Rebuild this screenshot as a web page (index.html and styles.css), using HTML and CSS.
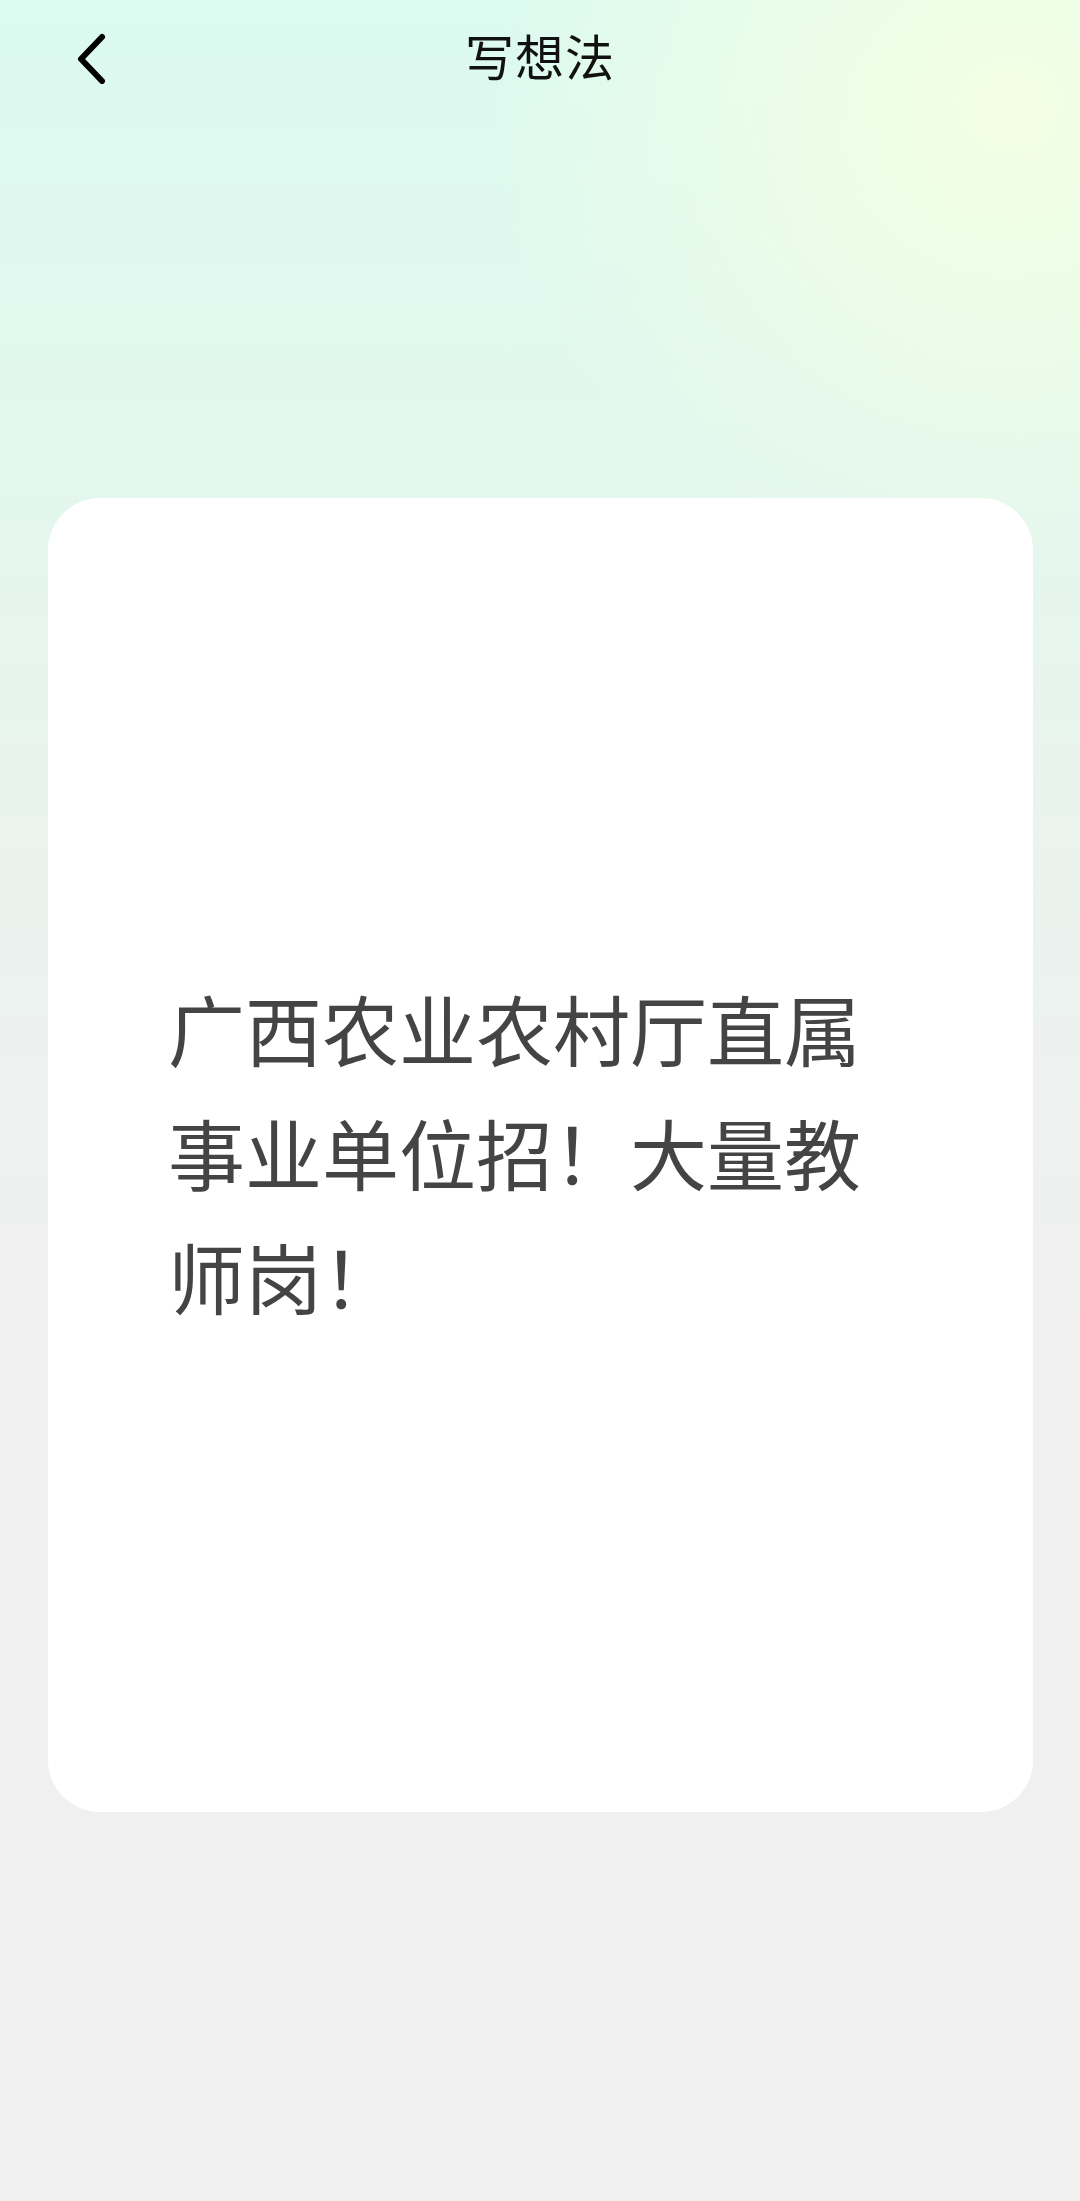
FILE: index.html
```html
<!DOCTYPE html>
<html lang="zh-CN">
<head>
<meta charset="utf-8">
<title>写想法</title>
<link rel="stylesheet" href="styles.css">
</head>
<body>
<div class="page">
  <header class="topbar">
    <div class="back">
      <svg width="40" height="60" viewBox="0 0 40 60" aria-hidden="true">
        <polyline points="25,13 4,35 25,57" fill="none" stroke="#000" stroke-width="6" stroke-linecap="round" stroke-linejoin="round"/>
      </svg>
    </div>
    <h1 class="title">写想法</h1>
    <div class="spacer"></div>
  </header>
  <main class="content">
    <section class="card">
      <p class="idea">广西农业农村厅直属事业单位招！大量教师岗！</p>
    </section>
  </main>
</div>
</body>
</html>
```

FILE: styles.css
```css
html, body {
  margin: 0;
  padding: 0;
}
body {
  width: 1080px;
  min-height: 2201px;
  font-family: "Noto Sans CJK SC", "Noto Sans", sans-serif;
  background:
    radial-gradient(ellipse 520px 480px at 1010px 110px, rgba(243,255,228,1) 0%, rgba(243,255,228,0.6) 45%, rgba(243,255,228,0) 100%),
    linear-gradient(180deg, #dcfaf0 0px, #e3f7ee 480px, #eaf3ee 820px, #f0f0f0 1320px, #f0f0f0 2201px);
  background-repeat: no-repeat;
  background-color: #f0f0f0;
}
.page {
  display: flex;
  flex-direction: column;
}
.topbar {
  height: 108px;
  display: grid;
  grid-template-columns: 1fr auto 1fr;
  align-items: center;
}
.back {
  padding-left: 77px;
  display: flex;
  align-items: center;
  height: 100%;
}
.back svg {
  display: block;
  margin-top: 0;
}
.title {
  margin: 0;
  font-size: 49px;
  font-weight: 400;
  color: #111;
  line-height: 1;
  letter-spacing: 1px;
}
.content {
  padding: 390px 47px 0 48px;
}
.card {
  height: 1314px;
  background: #fff;
  border-radius: 52px;
  display: flex;
  align-items: center;
  padding: 0 110px 0 120px;
  box-sizing: border-box;
}
.idea {
  margin: -6px 0 0 0;
  font-size: 77px;
  line-height: 124px;
  color: #444;
  font-weight: 400;
}
```
